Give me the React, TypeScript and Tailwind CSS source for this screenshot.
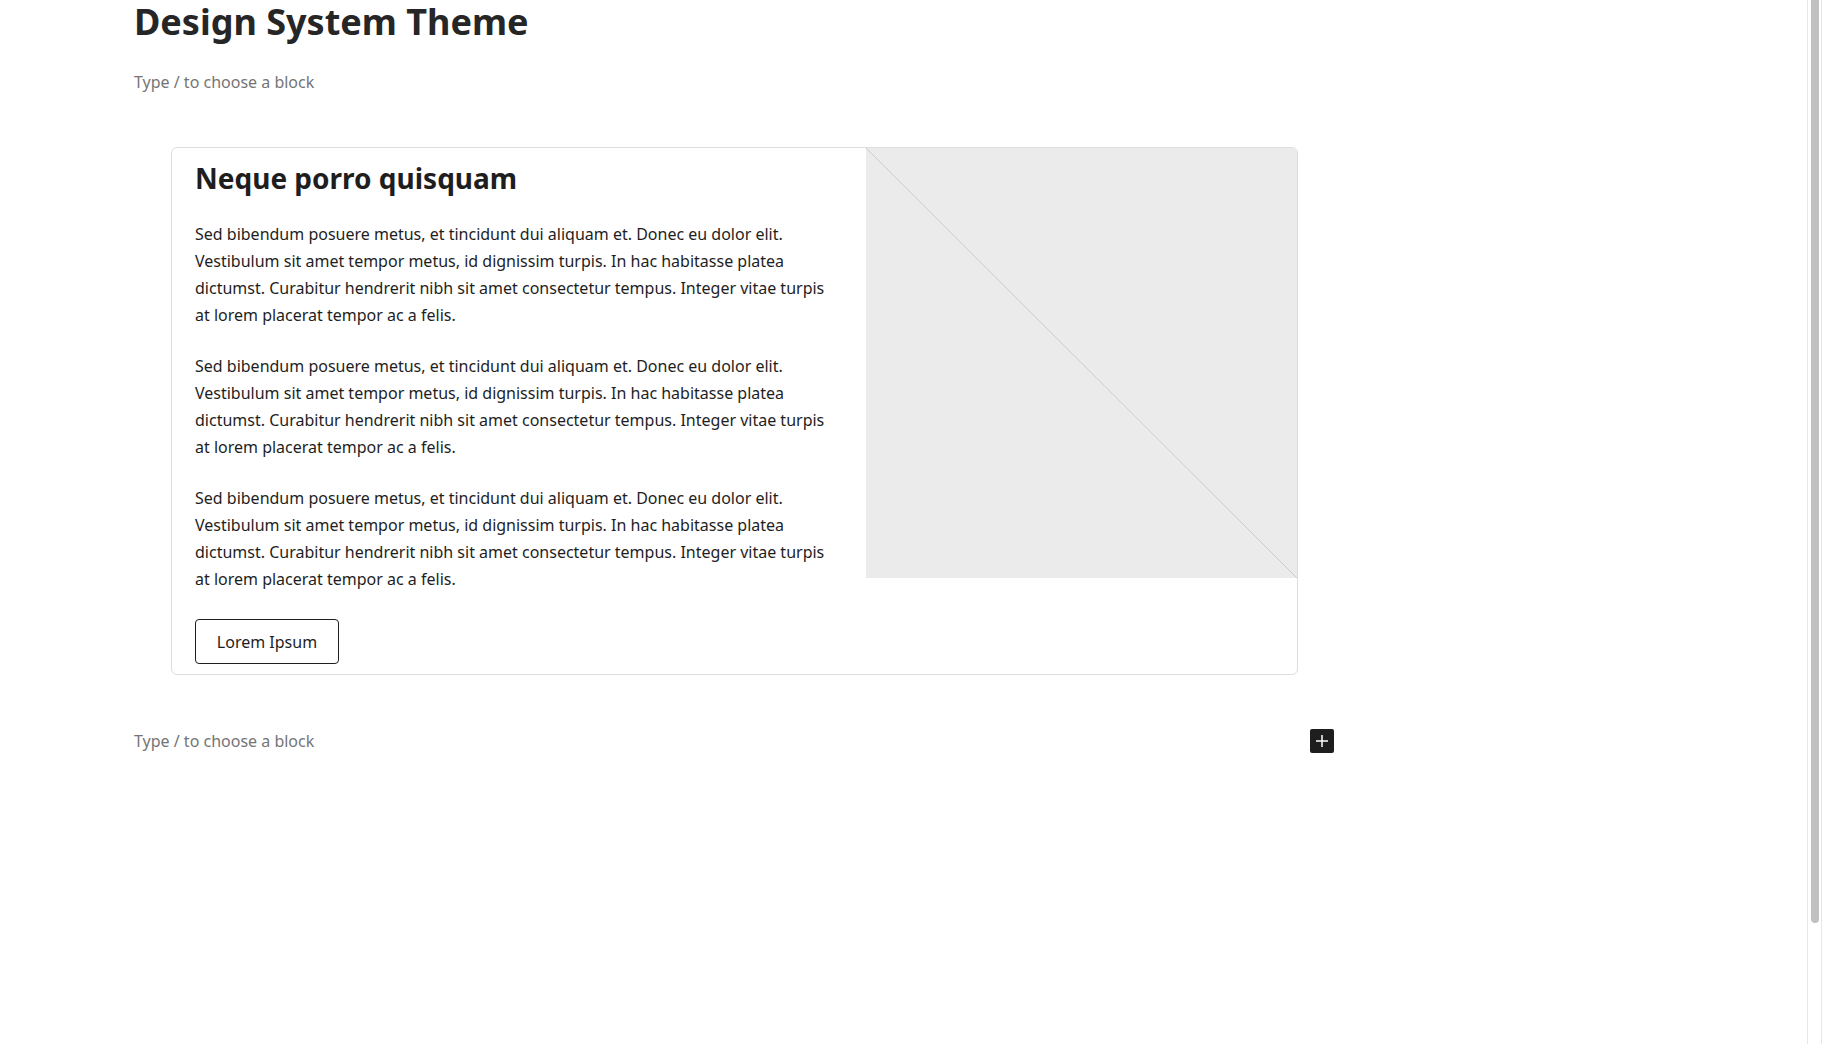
import React from "react";

const body =
    "Sed bibendum posuere metus, et tincidunt dui aliquam et. Donec eu dolor elit. Vestibulum sit amet tempor metus, id dignissim turpis. In hac habitasse platea dictumst. Curabitur hendrerit nibh sit amet consectetur tempus. Integer vitae turpis at lorem placerat tempor ac a felis.";

function Placeholder() {
    return <p className="text-[16px] leading-6 text-[#757575]">Type / to choose a block</p>;
}

function ImagePlaceholder() {
    return (
        <div className="w-[431px] h-[430px] shrink-0 bg-[#ebebeb] rounded-tr-[5px] overflow-hidden">
            <svg width="431" height="430" viewBox="0 0 431 430" preserveAspectRatio="none">
                <line x1="0" y1="0" x2="431" y2="430" stroke="#cccccc" strokeWidth="1" />
            </svg>
        </div>
    );
}

function MediaCard() {
    return (
        <div className="ml-[37px] mt-[53px] w-[1127px] flex items-start border border-[#dddddd] rounded-md">
            <div className="w-[694px] shrink-0 pl-[23px] pr-6 pt-[11px] pb-[10px]">
                <h2 className="text-[28px] leading-[38px] font-bold text-[#1e1e1e]">Neque porro quisquam</h2>
                <div className="mt-[24px] flex flex-col gap-6">
                    {[0, 1, 2].map((i) => (
                        <p key={i} className="text-[16px] leading-[27px] text-[#1e1e1e]">
                            {body}
                        </p>
                    ))}
                </div>
                <button className="mt-[26px] w-[144px] h-[45px] flex items-center justify-center border border-[#1e1e1e] rounded-[4px] text-[16px] text-[#1e1e1e]">
                    Lorem Ipsum
                </button>
            </div>
            <ImagePlaceholder />
        </div>
    );
}

function Scrollbar() {
    return (
        <div className="w-[15px] h-full shrink-0 border-l border-r border-[#e6e6e6] pl-[3px]">
            <div className="w-[8px] h-[923px] bg-[#c1c1c1] rounded-b-[4px]"></div>
        </div>
    );
}

export default function App() {
    return (
        <div className="flex h-[1044px] bg-white overflow-hidden" style={{ fontFamily: '"Noto Sans", "Open Sans", sans-serif' }}>
            <main className="flex-1 pl-[134px]">
                <h1 className="text-[36px] leading-[1.2] font-bold text-[#262626]">Design System Theme</h1>
                <div className="mt-[27px]">
                    <Placeholder />
                </div>
                <MediaCard />
                <div className="mt-[54px] w-[1200px] h-6 flex items-center justify-between">
                    <Placeholder />
                    <button className="w-6 h-6 flex items-center justify-center bg-[#1e1e1e] rounded-[2px]">
                        <svg width="14" height="14" viewBox="0 0 14 14">
                            <path d="M7 1v12M1 7h12" stroke="white" strokeWidth="1.5" />
                        </svg>
                    </button>
                </div>
            </main>
            <Scrollbar />
        </div>
    );
}
